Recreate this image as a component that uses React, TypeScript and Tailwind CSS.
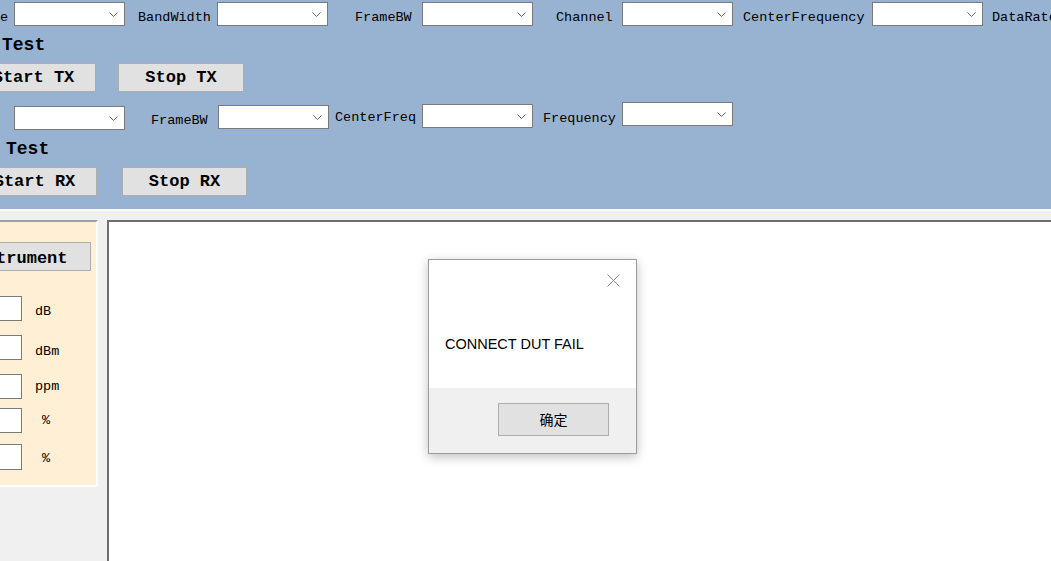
import React from "react";

function Combo({ className = "" }: { className?: string }) {
  return (
    <div
      className={
        "shrink-0 w-[111px] h-[24px] border border-[#7a7a7a] bg-white flex items-center justify-end pr-[6px] " +
        className
      }
    >
      <svg width="9" height="5" viewBox="0 0 9 5">
        <path d="M0.5 0.5 L4.5 4.5 L8.5 0.5" stroke="#606060" strokeWidth="1" fill="none" />
      </svg>
    </div>
  );
}

function Btn({ children, className = "" }: { children: React.ReactNode; className?: string }) {
  return (
    <div
      className={
        "shrink-0 h-[29px] bg-[#e1e1e1] border border-[#adadad] flex items-center justify-center whitespace-nowrap font-['Liberation_Mono',monospace] font-bold text-[17px] leading-none text-black " +
        className
      }
    >
      {children}
    </div>
  );
}

const lbl =
  "shrink-0 whitespace-nowrap font-['Liberation_Mono',monospace] text-[13.5px] leading-[16px] text-black";

export default function App() {
  return (
    <div className="relative w-[1051px] h-[561px] overflow-hidden bg-[#f0f0f0] flex flex-col">
      {/* Header */}
      <div className="shrink-0 h-[209px] bg-[#98b3d1] flex flex-col overflow-hidden">
        {/* Row 1 */}
        <div className="flex items-start pt-[2px]">
          <div className={lbl + " w-[14px] mt-[8px]"}>e</div>
          <Combo />
          <div className={lbl + " w-[92px] pl-[13px] mt-[8px]"}>BandWidth</div>
          <Combo />
          <div className={lbl + " w-[94px] pl-[27px] mt-[8px]"}>FrameBW</div>
          <Combo />
          <div className={lbl + " w-[89px] pl-[23px] mt-[8px]"}>Channel</div>
          <Combo />
          <div className={lbl + " w-[139px] pl-[10px] mt-[8px]"}>CenterFrequency</div>
          <Combo />
          <div className={lbl + " pl-[9px] mt-[8px]"}>DataRate</div>
        </div>
        <div className="mt-[9px] pl-[2px] font-['Liberation_Mono',monospace] font-bold text-[18px] leading-[20px] text-black whitespace-nowrap">
          Test
        </div>
        <div className="flex mt-[8px]">
          <Btn className="w-[125px] -ml-[29px]">Start TX</Btn>
          <Btn className="w-[126px] ml-[22px]">Stop TX</Btn>
        </div>
        {/* Row 2 */}
        <div className="flex items-start mt-[10px]">
          <div className="shrink-0 w-[14px]" />
          <Combo className="mt-[4px]" />
          <div className={lbl + " w-[93px] pl-[26px] mt-[11px]"}>FrameBW</div>
          <Combo className="mt-[3px]" />
          <div className={lbl + " w-[93px] pl-[6px] mt-[8px]"}>CenterFreq</div>
          <Combo className="mt-[2px]" />
          <div className={lbl + " w-[89px] pl-[10px] mt-[9px]"}>Frequency</div>
          <Combo />
        </div>
        <div className="mt-[9px] pl-[6px] font-['Liberation_Mono',monospace] font-bold text-[18px] leading-[20px] text-black whitespace-nowrap">
          Test
        </div>
        <div className="flex mt-[8px]">
          <Btn className="w-[125px] -ml-[28px]">Start RX</Btn>
          <Btn className="w-[125px] ml-[25px]">Stop RX</Btn>
        </div>
      </div>

      {/* Body */}
      <div className="flex-1 flex border-t-2 border-[#f9f9f9] pt-[9px] min-h-0">
        {/* Left panel */}
        <div className="shrink-0 w-[98px] self-start h-[267px] bg-[#ffefd5] border-t-2 border-t-[#a0a0a0] border-r-2 border-r-[#fbfbfb] border-b-2 border-b-[#fbfbfb] overflow-hidden">
          <Btn className="mt-[20px] h-[28px] -ml-[58px] w-[149px] text-[16.5px] pt-[3px]">Instrument</Btn>
          <div className="flex items-start mt-[25px]">
            <div className="shrink-0 -ml-[40px] w-[62px] h-[25px] bg-white border border-[#7a7a7a]" />
            <div className={lbl + " ml-[13px] mt-[8px]"}>dB</div>
          </div>
          <div className="flex items-start mt-[14px]">
            <div className="shrink-0 -ml-[40px] w-[62px] h-[25px] bg-white border border-[#7a7a7a]" />
            <div className={lbl + " ml-[13px] mt-[9px]"}>dBm</div>
          </div>
          <div className="flex items-start mt-[14px]">
            <div className="shrink-0 -ml-[40px] w-[62px] h-[25px] bg-white border border-[#7a7a7a]" />
            <div className={lbl + " ml-[13px] mt-[5px]"}>ppm</div>
          </div>
          <div className="flex items-start mt-[9px]">
            <div className="shrink-0 -ml-[40px] w-[62px] h-[25px] bg-white border border-[#7a7a7a]" />
            <div className={lbl + " ml-[20px] mt-[5px]"}>%</div>
          </div>
          <div className="flex items-start mt-[11px]">
            <div className="shrink-0 -ml-[40px] w-[62px] h-[26px] bg-white border border-[#7a7a7a]" />
            <div className={lbl + " ml-[20px] mt-[7px]"}>%</div>
          </div>
        </div>
        {/* Right panel */}
        <div className="flex-1 ml-[9px] bg-white border-t-2 border-l-2 border-[#6d6d6d]" />
      </div>

      {/* Dialog */}
      <div className="absolute left-[428px] top-[259px] w-[209px] h-[195px] border border-[#9c9c9c] bg-white shadow-[0_3px_10px_rgba(0,0,0,0.25)] flex flex-col">
        <div className="relative shrink-0 h-[128px] pt-[74px] pl-[16px]">
          <svg
            className="absolute top-[14px] right-[16px]"
            width="13"
            height="13"
            viewBox="0 0 13 13"
          >
            <path d="M0.5 0.5 L12.5 12.5 M12.5 0.5 L0.5 12.5" stroke="#8a8a8a" strokeWidth="1" fill="none" />
          </svg>
          <div className="font-['Liberation_Sans',sans-serif] text-[14.5px] leading-[20px] text-black whitespace-nowrap">
            CONNECT DUT FAIL
          </div>
        </div>
        <div className="flex-1 bg-[#f0f0f0] pt-[15px] pl-[69px]">
          <div className="w-[111px] h-[33px] bg-[#e1e1e1] border border-[#adadad] flex items-center justify-center font-['Noto_Sans_CJK_SC','Liberation_Sans',sans-serif] text-[14px] text-black">
            确定
          </div>
        </div>
      </div>
    </div>
  );
}
